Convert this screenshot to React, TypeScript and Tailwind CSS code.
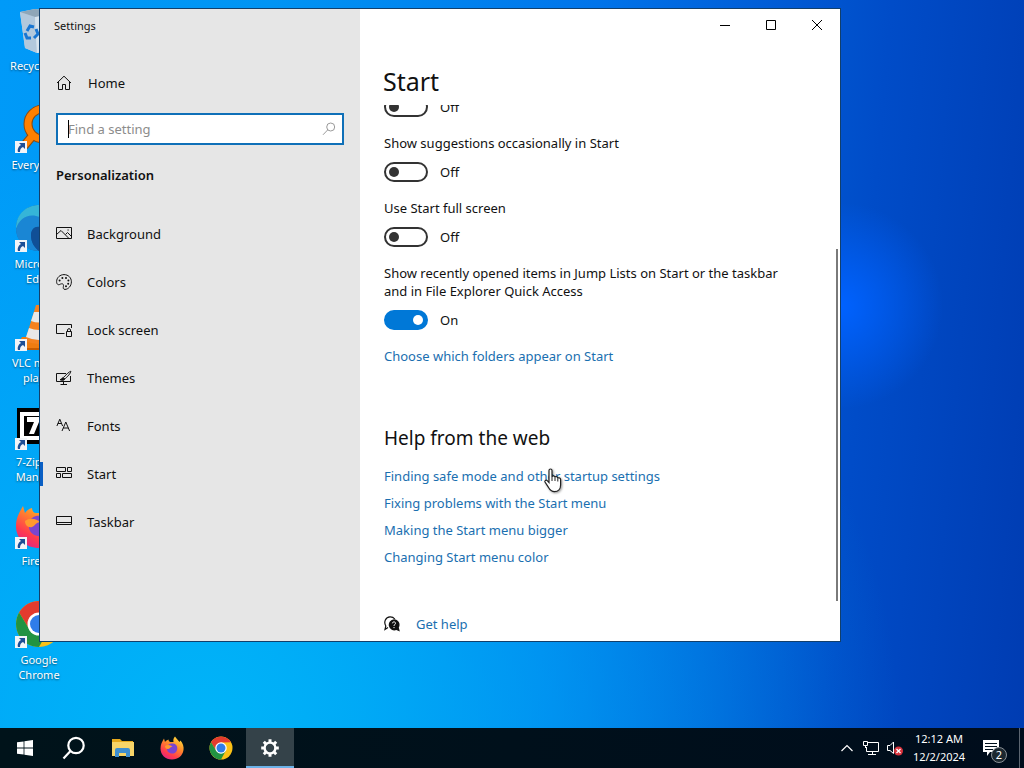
import React, { useState } from "react";

const RecycleIcon = () => (
  <svg viewBox="0 0 48 48" className="size-12">
    <path d="M5 6 L20 3 L43 6 L37 45 L22 47 L10 42 Z" fill="#c4d6e6" />
    <path d="M5 6 L20 11 L22 47 L10 42 Z" fill="#b2c8dc" />
    <path d="M20 11 L43 6 L37 45 L22 47 Z" fill="#d8e4ee" />
    <path d="M5 6 L20 3 L43 6 L20 11 Z" fill="#8fa6b8" />
    <g fill="none" stroke="#1976d2" strokeWidth="3">
      <path d="M12 25 L15 20 L19 21" />
      <path d="M10 27 L12 32 L16 32" />
      <path d="M21 23 L23 28 L19 32" />
    </g>
  </svg>
);

const EverythingIcon = () => (
  <svg viewBox="0 0 48 48" className="size-12">
    <path d="M19 29 L9 41" stroke="#8a4a10" strokeWidth="9" />
    <circle cx="28" cy="19" r="15" fill="none" stroke="#8a4a10" strokeWidth="9" />
    <path d="M19 29 L9 41" stroke="#ff8000" strokeWidth="7" />
    <circle cx="28" cy="19" r="15" fill="none" stroke="#ff8000" strokeWidth="7" />
  </svg>
);

const EdgeIcon = () => (
  <svg viewBox="0 0 48 48" className="size-12">
    <circle cx="24" cy="24" r="23" fill="#0f5ea8" />
    <path d="M1 25 C1 8 13 1 25 1 C38 1 47 10 47 22 C40 14 32 14 24 15 C14 13 5 17 1 25 Z" fill="#35b5d8" />
    <path d="M1 25 C4 15 12 10 21 12 C32 14 34 22 30 25 C24 20 16 24 16 31 C16 38 19 43 24 47 C10 47 1 36 1 25 Z" fill="#1a86d4" />
    <path d="M16 31 C16 24 22 20 29 25 C26 30 30 38 44 35 C40 43 32 47 24 47 C19 43 16 38 16 31 Z" fill="#104f96" />
  </svg>
);

const VlcIcon = () => (
  <svg viewBox="0 0 48 48" className="size-12">
    <path d="M7 34 L41 34 L47 45 L1 45 Z" fill="#f07c10" />
    <path d="M1 45 H47 V47 H1 Z" fill="#c85c00" />
    <path d="M21 2 H27 L38 38 Q24 44 10 38 Z" fill="#f5821f" />
    <path d="M19 9 L29 9 L32 18 Q24 21 16 18 Z" fill="#e8e8e8" />
    <path d="M14 25 Q24 29 34 25 L37 34 Q24 40 11 34 Z" fill="#e8e8e8" />
  </svg>
);

const SevenZipIcon = () => (
  <svg viewBox="0 0 48 48" className="size-12">
    <rect x="2" y="6" width="46" height="36" fill="#000" />
    <rect x="5" y="10" width="40" height="28" fill="#fff" />
    <rect x="9" y="14" width="32" height="20" fill="#000" />
    <path d="M12 15 H24 V20 L19 32 H14 L19 20 H12 Z" fill="#fff" />
    <path d="M27 15 H38 V19 L32 28 H38 V32 H26 V28 L32 19 H27 Z" fill="#fff" />
  </svg>
);

const FirefoxIcon = ({ className }: { className: string }) => (
  <svg viewBox="0 0 48 48" className={className}>
    <defs>
      <linearGradient id="ffBody" x1="0.8" y1="0" x2="0.2" y2="1">
        <stop offset="0" stopColor="#ffe23c" />
        <stop offset="0.4" stopColor="#ff8a2a" />
        <stop offset="0.75" stopColor="#ff3a4e" />
        <stop offset="1" stopColor="#e0218a" />
      </linearGradient>
    </defs>
    <path
      d="M30 1 C34 6 36 8 39 12 L41 9 C46 15 48 22 47 28 C45 40 36 47 24 47 C11 47 1 38 1 25 C1 17 4 12 8 5 L10 12 C12 9 14 8 17 7 C17 10 19 12 21 12 L27 12 C26 7 27 4 30 1 Z"
      fill="url(#ffBody)"
    />
    <path d="M14 23 C15 16 21 14 26 15 C33 16 36 22 34 28 C32 34 27 36 23 35 C17 34 13 30 14 23 Z" fill="#7a45d0" />
    <path d="M10 20 C15 16 22 18 25 21 C20 22 20 25 17 26 C13 27 10 24 10 20 Z" fill="#ff9a2e" />
  </svg>
);

const ChromeIcon = ({ className }: { className: string }) => (
  <svg viewBox="0 0 48 48" className={className}>
    <circle cx="24" cy="24" r="23" fill="#fbc117" />
    <path d="M4.1 12.5 A23 23 0 0 1 43.9 12.5 L24 13 L14.5 29.5 Z" fill="#e33b2e" />
    <path d="M4.1 12.5 A23 23 0 0 0 24 47 L33.5 29.5 L14.5 29.5 Z" fill="#229342" />
    <circle cx="24" cy="24" r="11.5" fill="#fff" />
    <circle cx="24" cy="24" r="9" fill="#2f7de9" />
  </svg>
);

const desktopIcons = [
  { label: "Recycle Bin", icon: <RecycleIcon />, shortcut: false },
  { label: "Everything", icon: <EverythingIcon />, shortcut: true },
  { label: "Microsoft Edge", icon: <EdgeIcon />, shortcut: true },
  { label: "VLC media player", icon: <VlcIcon />, shortcut: true },
  { label: "7-Zip File Manager", icon: <SevenZipIcon />, shortcut: true },
  { label: "Firefox", icon: <FirefoxIcon className="size-12" />, shortcut: true },
  { label: "Google Chrome", icon: <ChromeIcon className="size-12" />, shortcut: true },
];

const LineIcon = ({ children }: { children: React.ReactNode }) => (
  <svg viewBox="0 0 16 16" className="size-4 shrink-0" fill="none" stroke="#111" strokeWidth="1">
    {children}
  </svg>
);

const navItems = [
  {
    label: "Background",
    icon: (
      <LineIcon>
        <path d="M.5 1.5 H15.5 V12.5 H.5 Z" />
        <path d="M.5 8.5 L5 4.5 L13 12.5 M9.5 8.5 L11.5 6.5 L15.5 10.5" />
        <path d="M11.5 4 h1.2" />
      </LineIcon>
    ),
  },
  {
    label: "Colors",
    icon: (
      <LineIcon>
        <path d="M8 .6 C12.4.6 15.4 3.8 15.4 7.8 C15.4 12 12.2 15.4 9 15.4 C7.2 15.4 7.1 14 7.4 12.6 C7.8 10.8 7.2 9.6 5.6 9.8 C4 10 3.6 10.9 2.4 10.7 C1.1 10.4.6 9.1.6 7.6 C.6 3.6 4 .6 8 .6 Z" />
        <g fill="#111" stroke="none">
          <circle cx="3.6" cy="6.6" r="1" />
          <circle cx="6.4" cy="3.9" r="1" />
          <circle cx="10" cy="3.9" r="1" />
          <circle cx="12.4" cy="6.6" r="1" />
          <circle cx="12.2" cy="9.8" r="1" />
          <circle cx="10" cy="12.3" r="1" />
        </g>
      </LineIcon>
    ),
  },
  {
    label: "Lock screen",
    icon: (
      <LineIcon>
        <path d="M8.5 11.5 H.5 V2.5 H15.5 V6" />
        <path d="M10.5 9.5 H15.5 V14.5 H10.5 Z M11.5 9.5 V8 C11.5 6.2 14.5 6.2 14.5 8 V9.5" />
      </LineIcon>
    ),
  },
  {
    label: "Themes",
    icon: (
      <LineIcon>
        <path d="M10 3.5 H.5 V11.5 H14.5 V6 M7.5 11.5 V14 M4.5 14.5 H11" />
        <path d="M14.8 1.2 C13.5 1.4 9 5.6 7.4 7.6 L8.8 9 C11 7.2 15.2 2.8 14.8 1.2 Z" />
        <path d="M7.3 7.7 C5.6 7.6 5.8 9.4 4 9.7 C5.6 10.5 8.4 10.6 8.8 9" fill="#111" />
      </LineIcon>
    ),
  },
  {
    label: "Fonts",
    icon: (
      <LineIcon>
        <path d="M.9 8 L3.8 1.2 L6.6 8 M1.8 5.5 H5.6" />
        <path d="M6 13 L9.8 4 L13.6 13 M7.3 10 H12.3" />
      </LineIcon>
    ),
  },
  {
    label: "Start",
    active: true,
    icon: (
      <LineIcon>
        <path d="M.5 1.5 H9.5 V5.5 H.5 Z M11.5 1.5 H15.5 V5.5 H11.5 Z M.5 7.5 H4.5 V11.5 H.5 Z M6.5 7.5 H15.5 V11.5 H6.5 Z" />
      </LineIcon>
    ),
  },
  {
    label: "Taskbar",
    icon: (
      <LineIcon>
        <path d="M.5 2.5 H15.5 V10.5 H.5 Z M.5 8.5 H15.5" />
      </LineIcon>
    ),
  },
];

const helpLinks = [
  "Finding safe mode and other startup settings",
  "Fixing problems with the Start menu",
  "Making the Start menu bigger",
  "Changing Start menu color",
];

const DesktopIcon = ({ item }: { item: (typeof desktopIcons)[number] }) => (
  <button className="flex h-[99px] w-[78px] flex-col items-center gap-1">
    <span className="relative">
      {item.icon}
      {item.shortcut && (
        <svg viewBox="0 0 12 12" className="absolute bottom-0 left-0 size-3">
          <path d="M0 0 H12 V12 H0 Z" fill="#f2f4f8" />
          <path d="M4 2 H10 V8 L8 6 C6 7 5 8 5 11 H3 C2 8 4 5 6 4 Z" fill="#1d4e96" />
        </svg>
      )}
    </span>
    <span className="w-16 text-center text-[11px] leading-[15px] text-white [text-shadow:0_1px_2px_rgba(0,0,0,0.5)]">
      {item.label}
    </span>
  </button>
);

type ToggleProps = { label: string; initial?: boolean; showLabel?: boolean };

const Toggle = ({ label, initial = false, showLabel = true }: ToggleProps) => {
  const [on, setOn] = useState(initial);
  const id = label.toLowerCase().replaceAll(" ", "-");

  return (
    <div className="flex flex-col gap-2.5">
      {showLabel && <label htmlFor={id}>{label}</label>}
      <div className="flex h-5 items-center gap-3">
        <input
          id={id}
          type="checkbox"
          role="switch"
          aria-label={label}
          checked={on}
          onChange={() => setOn(!on)}
          className="flex h-5 w-11 shrink-0 appearance-none items-center rounded-full border-2 border-[#333] px-[3px] before:size-2.5 before:rounded-full before:bg-[#333] checked:justify-end checked:border-[#0078d7] checked:bg-[#0078d7] checked:before:bg-white"
        />
        <span>{on ? "On" : "Off"}</span>
      </div>
    </div>
  );
};

const Sidebar = () => (
  <aside className="flex w-80 shrink-0 flex-col bg-[#e6e6e6]">
    <div className="flex h-[34px] items-center px-3.5 text-[11px]">Settings</div>
    <a href="#home" className="mt-8 flex h-4 items-center gap-4 px-4">
      <svg viewBox="0 0 16 16" className="size-4 shrink-0" fill="none" stroke="#111">
        <path d="M1 8 L8 1.2 L15 8 M2.5 6.8 V14.5 H6.5 V9.5 H9.5 V14.5 H13.5 V6.8" />
      </svg>
      Home
    </a>
    <div className="relative mx-4 mt-[22px]">
      <input
        type="text"
        aria-label="Find a setting"
        placeholder="Find a setting"
        className="h-8 w-full border-2 border-[#0f70b8] bg-white px-2.5 outline-none placeholder:text-[#8c8c8c]"
      />
      <span className="absolute top-[7px] left-3 h-[18px] w-px bg-black" />
      <svg viewBox="0 0 14 14" className="absolute top-[9px] right-2 size-3.5" fill="none" stroke="#9a9a9a">
        <circle cx="8.7" cy="5" r="4" />
        <path d="M5.8 7.8 L1 12.8" />
      </svg>
    </div>
    <h2 className="mx-4 mt-5 leading-5 font-semibold">Personalization</h2>
    <nav className="mt-[25px] flex flex-col">
      {navItems.map((item) => (
        <a key={item.label} href={`#${item.label}`} className="relative flex h-12 items-center gap-[15px] px-4">
          {item.active && <span className="absolute left-0 h-6 w-[3px] bg-[#0a5fc4]" />}
          {item.icon}
          {item.label}
        </a>
      ))}
    </nav>
  </aside>
);

const WindowControls = () => (
  <div className="flex h-8 justify-end">
    <button aria-label="Minimize" className="flex w-[46px] items-center justify-center">
      <svg viewBox="0 0 11 11" className="size-[11px]" stroke="#000">
        <path d="M0 5.5 H10" />
      </svg>
    </button>
    <button aria-label="Maximize" className="flex w-[46px] items-center justify-center">
      <svg viewBox="0 0 11 11" className="size-[11px]" fill="none" stroke="#000">
        <path d="M.5 .5 H9.5 V9.5 H.5 Z" />
      </svg>
    </button>
    <button aria-label="Close" className="flex w-[46px] items-center justify-center">
      <svg viewBox="0 0 11 11" className="size-[11px]" stroke="#000">
        <path d="M0 0 L10 10 M10 0 L0 10" />
      </svg>
    </button>
  </div>
);

const SettingsWindow = () => (
  <div className="absolute top-2 right-[183px] bottom-[86px] left-[39px] flex border border-[#123f6b] bg-white text-[13px] leading-[18px] text-[#111]">
    <Sidebar />
    <main className="relative flex min-w-0 flex-1 flex-col">
      <WindowControls />
      <h1 className="mt-[22px] px-[23px] text-[25px] leading-9">Start</h1>
      {/* Scrolled to the end, so the list sticks to the bottom edge */}
      <div className="mt-1.5 flex min-h-0 flex-1 flex-col justify-end overflow-hidden px-6 pb-2">
        <div className="flex max-w-[420px] flex-col gap-[17px]">
          <Toggle label="Show most used apps" showLabel={false} />
          <Toggle label="Show suggestions occasionally in Start" />
          <Toggle label="Use Start full screen" />
          <Toggle
            label="Show recently opened items in Jump Lists on Start or the taskbar and in File Explorer Quick Access"
            initial
          />
          <a href="#folders" className="text-[#1a6fb0]">
            Choose which folders appear on Start
          </a>
        </div>
        <h2 className="mt-[59px] text-[19px] leading-7">Help from the web</h2>
        <ul className="mt-[15px] flex flex-col gap-[9px]">
          {helpLinks.map((link) => (
            <li key={link}>
              <a href="#help" className="text-[#1a6fb0]">
                {link}
              </a>
            </li>
          ))}
        </ul>
        <a href="#get-help" className="mt-[49px] flex items-center gap-4 text-[#1a6fb0]">
          <svg viewBox="0 0 16 16" className="size-4 shrink-0">
            <path d="M4 11.5 L1 13.5 L1.8 10 C-.6 6 1.6 1 6 .8 C8.5.7 10 2 10.8 3" fill="none" stroke="#111" strokeWidth="1.2" />
            <path d="M10 3.2 A5.6 5.6 0 0 1 14.8 11.6 L15.8 15.6 L12.4 14 A5.6 5.6 0 1 1 10 3.2 Z" fill="#111" />
            <path d="M8.4 7.3 C8.4 5.4 11.6 5.4 11.5 7.3 C11.4 8.5 10 8.5 10 10 M10 11 V12.1" fill="none" stroke="#fff" />
          </svg>
          Get help
        </a>
      </div>
      <span className="absolute right-0.5 bottom-10 h-[352px] w-0.5 bg-[#7a7a7a]" />
    </main>
  </div>
);

const taskbarApps = [
  {
    label: "Start menu",
    icon: (
      <svg viewBox="0 0 16 16" className="size-4" fill="#fff">
        <path d="M0 2.3 L6.6 1.4 V7.6 H0 Z M7.4 1.3 L16 0 V7.6 H7.4 Z M0 8.4 H6.6 V14.6 L0 13.7 Z M7.4 8.4 H16 V16 L7.4 14.7 Z" />
      </svg>
    ),
  },
  {
    label: "Search",
    icon: (
      <svg viewBox="0 0 24 24" className="size-6" fill="none" stroke="#fff" strokeWidth="2.2">
        <circle cx="14" cy="9.5" r="7.7" />
        <path d="M8.5 15 L1.5 22.5" />
      </svg>
    ),
  },
  {
    label: "File Explorer",
    icon: (
      <svg viewBox="0 0 24 24" className="size-6">
        <path d="M1 3 H9 L11 5 H22 V20 H1 Z" fill="#e6a91c" />
        <path d="M1 6 H23 V20 H1 Z" fill="#f8d568" />
        <path d="M4 21 V14 Q4 12 6 12 H17 Q19 12 19 14 V21 H15 V17 H8 V21 Z" fill="#3f8fd0" />
      </svg>
    ),
  },
  { label: "Firefox", icon: <FirefoxIcon className="size-6" /> },
  { label: "Google Chrome", icon: <ChromeIcon className="size-6" /> },
  {
    label: "Settings",
    active: true,
    icon: (
      <svg viewBox="0 0 20 20" className="size-5" fill="none" stroke="#fff">
        <circle cx="10" cy="10" r="5.4" strokeWidth="2.4" />
        <path
          d="M10 1.2 V4.5 M10 15.5 V18.8 M1.2 10 H4.5 M15.5 10 H18.8 M3.8 3.8 L6.2 6.2 M13.8 13.8 L16.2 16.2 M16.2 3.8 L13.8 6.2 M6.2 13.8 L3.8 16.2"
          strokeWidth="3"
        />
      </svg>
    ),
  },
];

const Taskbar = () => (
  <footer className="flex h-10 shrink-0 items-stretch bg-[linear-gradient(to_right,#00131a,#000d1c)] text-white">
    <div className="flex gap-px pl-px">
      {taskbarApps.map((app) => (
        <button
          key={app.label}
          aria-label={app.label}
          className={`flex w-12 items-center justify-center border-b-2 pt-0.5 ${
            app.active ? "border-[#6cb2e8] bg-[#344249]" : "border-transparent"
          }`}
        >
          {app.icon}
        </button>
      ))}
    </div>
    <div className="ml-auto flex items-center">
      <button aria-label="Show hidden icons" className="flex w-6 justify-center">
        <svg viewBox="0 0 12 12" className="size-3" fill="none" stroke="#fff" strokeWidth="1.2">
          <path d="M.5 9 L6 3.5 L11.5 9" />
        </svg>
      </button>
      <button aria-label="Network" className="flex w-6 justify-center">
        <svg viewBox="0 0 16 16" className="size-4" fill="none" stroke="#fff">
          <path d="M5 2.5 H15.5 V11.5 H3.5 V7 M.5 1.5 H4.5 V5.5 H.5 Z M2.5 5.5 V8 M9.5 11.5 V14 M5 14.5 H13" />
        </svg>
      </button>
      <button aria-label="Volume" className="flex w-6 justify-center">
        <svg viewBox="0 0 16 16" className="size-4">
          <path d="M.5 5.5 H3 L6.5 2 V13.5 L3 10.5 H.5 Z" fill="none" stroke="#fff" />
          <circle cx="11.5" cy="11" r="4.5" fill="#d8323c" />
          <path d="M9.5 9 L13.5 13 M13.5 9 L9.5 13" stroke="#fff" strokeWidth="1.3" />
        </svg>
      </button>
      <div className="flex w-16 flex-col items-center text-[11px] leading-[18px] whitespace-nowrap">
        <span>12:12 AM</span>
        <span>12/2/2024</span>
      </div>
      <button aria-label="Notifications" className="relative flex w-12 justify-center pr-2">
        <svg viewBox="0 0 18 18" className="size-[18px]">
          <path d="M1 1 H17 V13 H8 L5 17 V13 H1 Z" fill="#fff" />
          <path d="M3 4.5 H15 M3 7.5 H15 M3 10.5 H11" stroke="#00101c" />
        </svg>
        <span className="absolute top-2 left-5 flex size-4 items-center justify-center rounded-full border border-[#8a9096] bg-[#1c2830] text-[11px]">
          2
        </span>
      </button>
      <button aria-label="Show desktop" className="h-10 w-[5px] border-l border-[#5c6570]" />
    </div>
  </footer>
);

const HandCursor = () => (
  <svg
    viewBox="0 0 18 25"
    className="pointer-events-none absolute top-[468px] left-[544px] h-[25px] w-[18px] drop-shadow-[1px_1px_1px_rgba(0,0,0,0.4)]"
  >
    <path
      d="M5 2.5 C5 .5 8 .5 8 2.5 V9 C8 7.5 11 7.5 11 9.5 C11 8.2 13.8 8.4 13.8 10.4 C14 9.4 16.6 9.6 16.6 11.5 V17 C16.6 21 14 23.6 10.5 23.6 C6.5 23.6 5.4 21 4 18.6 L1 14 C.4 12.6 2 11.6 3.2 12.6 L5 14.5 Z"
      fill="#fff"
      stroke="#222"
      strokeWidth="1.2"
    />
    <path d="M8 9 V13 M11 9.5 V13 M13.8 10.4 V13.5" stroke="#222" />
  </svg>
);

const App = () => (
  <div className="relative flex h-screen flex-col overflow-hidden bg-[#0a60d8] font-['Noto_Sans','Open_Sans',sans-serif]">
    <div className="relative min-h-0 flex-1 bg-[radial-gradient(circle_at_82%_42%,#0062ff_0,#0062ff00_11%),radial-gradient(ellipse_at_20%_100%,#00b4f8_0,#00b4f800_60%),linear-gradient(95deg,#009af8_0%,#0094f4_25%,#0074ea_55%,#004cc8_82%,#003cb2_100%)]">
      <div className="flex flex-col pt-1.5">
        {desktopIcons.map((item) => (
          <DesktopIcon key={item.label} item={item} />
        ))}
      </div>
      <SettingsWindow />
    </div>
    <Taskbar />
    <HandCursor />
  </div>
);

export default App;
